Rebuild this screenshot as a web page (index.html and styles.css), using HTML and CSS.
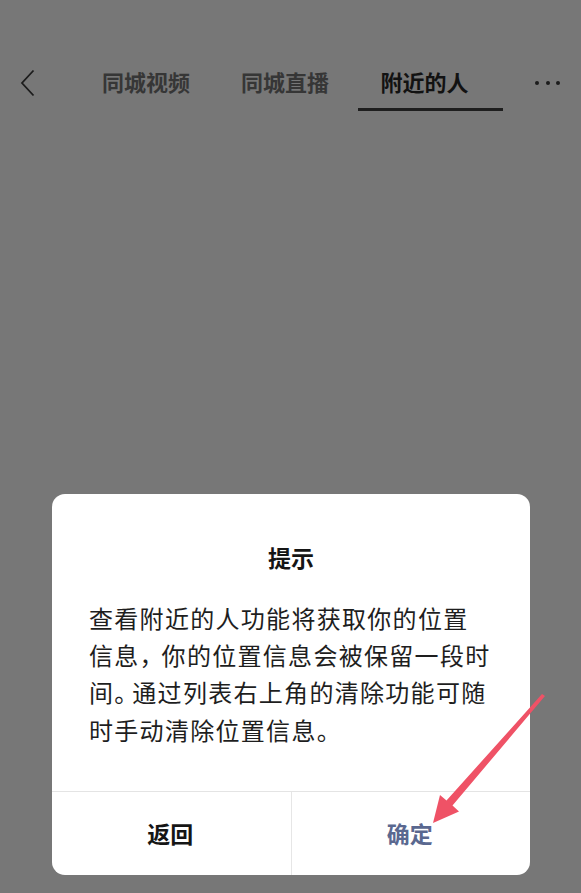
FILE: index.html
```html
<!DOCTYPE html>
<html lang="zh-CN">
<head>
<meta charset="utf-8">
<link rel="stylesheet" href="styles.css">
</head>
<body>
<div class="page">
  <header class="topbar">
    <div class="back">
      <svg width="16" height="28" viewBox="0 0 16 28"><path d="M13.5 1.5 L2 14 L13.5 26.5" fill="none" stroke="#1c1c1c" stroke-width="1.8" stroke-linejoin="miter"/></svg>
    </div>
    <nav class="tabs">
      <div class="tab t1">同城视频</div>
      <div class="tab t2">同城直播</div>
      <div class="tab active">附近的人</div>
    </nav>
    <div class="more">
      <span class="dot"></span><span class="dot"></span><span class="dot"></span>
    </div>
  </header>
  <div class="spacer"></div>
  <section class="dialog">
    <h2 class="title">提示</h2>
    <p class="body">查看附近的人功能将获取你的位置信息<span class="comma">，</span>你的位置信息会被保留一段时间<span class="stop">。</span>通过列表右上角的清除功能可随时手动清除位置信息<span class="stop">。</span></p>
    <div class="actions">
      <div class="btn back-btn">返回</div>
      <div class="btn ok-btn">确定</div>
    </div>
  </section>
  <svg class="arrow" width="581" height="893" viewBox="0 0 581 893">
    <polygon points="542,694 545,696 452.5,805.5 459,811.5 433,823 440,795 446.5,800.5" fill="#ef5266"/>
  </svg>
</div>
</body>
</html>
```

FILE: styles.css
```css
* { box-sizing: border-box; }
html, body { margin: 0; padding: 0; }
body {
  background: #777777;
  font-family: "Noto Sans CJK SC", "Noto Sans", sans-serif;
}
.page {
  position: relative;
  width: 581px;
  height: 893px;
  display: flex;
  flex-direction: column;
  overflow: hidden;
}
.topbar {
  margin-top: 56px;
  height: 55px;
  display: flex;
  align-items: stretch;
}
.back {
  width: 78px;
  padding-left: 20px;
  display: flex;
  align-items: center;
  padding-bottom: 2px;
}
.tabs {
  display: flex;
  align-items: stretch;
}
.tab {
  display: flex;
  align-items: center;
  justify-content: center;
  font-size: 22px;
  font-weight: 700;
  color: #363636;
  line-height: 1;
  padding-bottom: 6px;
}
.t1 { width: 136px; }
.t2 { width: 142px; }
.tab.active {
  color: #121212;
  border-bottom: 3px solid #1e1e1e;
  width: 145px;
  margin-left: 2px;
  padding-right: 12px;
  padding-bottom: 3px;
}
.more {
  flex: 1;
  display: flex;
  align-items: center;
  justify-content: flex-end;
  gap: 6.5px;
  padding-right: 21px;
  padding-bottom: 2px;
}
.dot {
  width: 4px;
  height: 4px;
  border-radius: 50%;
  background: #1c1c1c;
}
.spacer { flex: 1; }
.dialog {
  margin: 0 51px 18px 52px;
  background: #ffffff;
  border-radius: 13px;
  display: flex;
  flex-direction: column;
}
.title {
  margin: 0;
  padding-top: 48px;
  text-align: center;
  font-size: 23px;
  line-height: 30px;
  font-weight: 700;
  color: #151515;
}
.body {
  margin: 0;
  padding: 27px 38px 43px 37px;
  font-size: 24px;
  line-height: 37.3px;
  letter-spacing: 1.3px;
  color: #1e1e1e;
}
.comma {
  font-feature-settings: "halt";
  margin-right: 8.7px;
}
.stop {
  font-feature-settings: "halt";
  margin-right: 4.7px;
}
.actions {
  display: flex;
  border-top: 1px solid #e4e4e4;
  height: 84px;
}
.btn {
  flex: 1;
  display: flex;
  align-items: center;
  justify-content: center;
  font-size: 23px;
  font-weight: 700;
  padding-bottom: 2px;
}
.back-btn {
  color: #151515;
  border-right: 1px solid #e6e6e6;
  padding-right: 2px;
}
.ok-btn {
  color: #5a6890;
  padding-right: 2px;
}
.arrow {
  position: absolute;
  left: 0;
  top: 0;
  pointer-events: none;
}
```
